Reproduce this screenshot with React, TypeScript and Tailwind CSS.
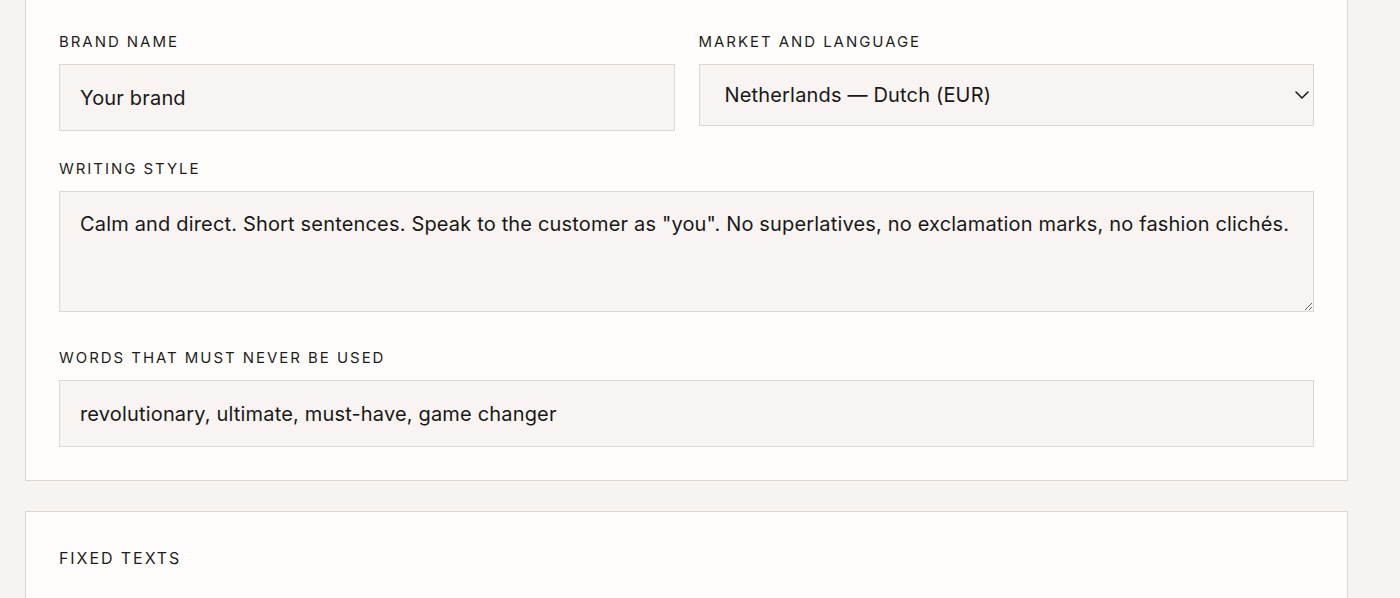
import { ChevronDown } from "lucide-react";

const labelClass =
  "block text-[15px] leading-5 uppercase tracking-[0.13em] text-[#1f1d1b] mb-3";
const fieldClass =
  "block w-full border border-[#ddd6d1] bg-[#f7f4f2] px-5 text-[20px] leading-[30px] tracking-[0.17px] text-[#1a1816] outline-none";

export default function App() {
  return (
    <div
      className="min-h-screen bg-[#f6f3f1] pl-[25px] pb-10 overflow-hidden"
      style={{ fontFamily: "Inter, 'Noto Sans', sans-serif" }}
    >
      <section className="-mt-[2px] w-[1323px] border border-[#ddd6d1] bg-[#fefdfc] px-[33px] pt-[33px] pb-[33px]">
        <div className="grid grid-cols-2 gap-x-6">
          <div>
            <label className={labelClass}>Brand name</label>
            <input className={`${fieldClass} h-[67px]`} defaultValue="Your brand" />
          </div>
          <div>
            <label className={labelClass}>Market and language</label>
            <div className="relative">
              <select
                className="block h-[62px] w-full appearance-none border border-[#ddd6d1] bg-[#f7f4f2] pl-[25px] pr-10 text-[20px] tracking-[0.17px] text-[#1a1816] outline-none"
                defaultValue="nl"
              >
                <option value="nl">Netherlands — Dutch (EUR)</option>
                <option value="be">Belgium — Dutch (EUR)</option>
                <option value="de">Germany — German (EUR)</option>
              </select>
              <ChevronDown
                className="pointer-events-none absolute right-0 top-1/2 -translate-y-1/2 text-[#1a1816]"
                size={24}
                strokeWidth={1.5}
              />
            </div>
          </div>
        </div>

        <div className="mt-7">
          <label className={labelClass}>Writing style</label>
          <textarea
            className={`${fieldClass} h-[121px] py-[17px] resize-y`}
            defaultValue={`Calm and direct. Short sentences. Speak to the customer as "you". No superlatives, no exclamation marks, no fashion clichés.`}
          />
        </div>

        <div className="mt-9">
          <label className={labelClass}>Words that must never be used</label>
          <input
            className={`${fieldClass} h-[67px]`}
            defaultValue="revolutionary, ultimate, must-have, game changer"
          />
        </div>
      </section>

      <section className="mt-[30px] w-[1323px] border border-[#ddd6d1] bg-[#fefdfc] px-[33px] pt-[35px] pb-10">
        <h2 className="text-[16px] leading-[22px] uppercase tracking-[0.12em] text-[#1f1d1b]">
          Fixed texts
        </h2>
        <div className="h-40" />
      </section>
    </div>
  );
}
